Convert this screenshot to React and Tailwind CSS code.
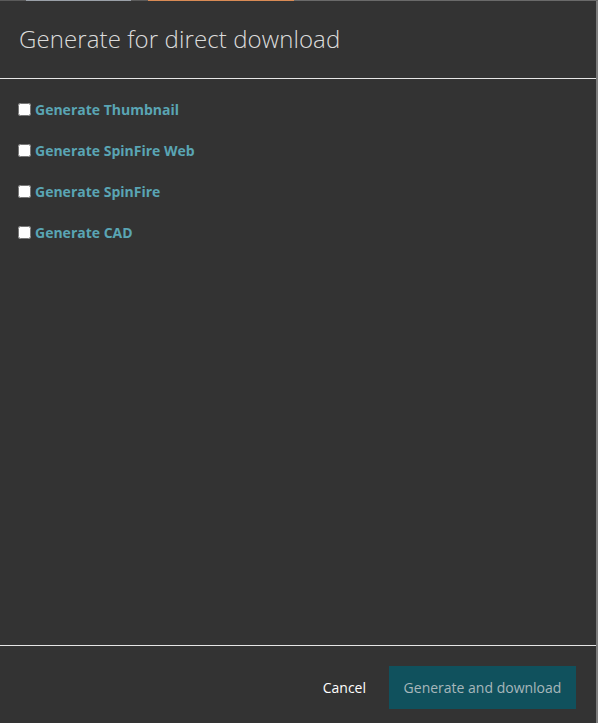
const options = [
  "Generate Thumbnail",
  "Generate SpinFire Web",
  "Generate SpinFire",
  "Generate CAD",
];

const App = () => {
  return (
    <div
      className="w-[598px] h-[723px] bg-[#6f6f6f] flex flex-col overflow-hidden"
      style={{ fontFamily: '"Open Sans", "Noto Sans", sans-serif' }}
    >
      {/* sliver of the page behind the dialog */}
      <div className="h-px flex shrink-0">
        <div className="w-[26px] bg-[#5a5a5a]" />
        <div className="w-[105px] bg-[#9aa0a8]" />
        <div className="w-[17px] bg-[#5a5a5a]" />
        <div className="w-[146px] bg-[#d98b55]" />
        <div className="flex-1 bg-[#6a6a6a]" />
      </div>

      <div className="flex-1 flex">
        <div className="w-[596px] bg-[#333333] flex flex-col">
          <div className="h-[78px] flex items-center px-[19px] pb-[1px] border-b border-[#e6e6e6]">
            <h2 className="text-[24px] font-light text-[#dcdcdc] tracking-[0.1px]">
              Generate for direct download
            </h2>
          </div>

          <div className="flex-1 flex flex-col gap-[20px] pt-[20px] px-[18px]">
            {options.map((label) => (
              <label key={label} className="flex items-center gap-[4px] h-[21px]">
                <input type="checkbox" className="w-[13px] h-[13px] m-0" />
                <span className="text-[14px] font-bold text-[#5aa5b4]">{label}</span>
              </label>
            ))}
          </div>

          <div className="h-[78px] border-t border-[#e6e6e6] flex items-center justify-end pr-[20px] pt-[6px]">
            <button className="text-[14px] text-white px-[23px] h-[43px]">Cancel</button>
            <button className="h-[43px] w-[187px] bg-[#10515d] text-[14px] text-[#a7b7bb]">
              Generate and download
            </button>
          </div>
        </div>
        <div className="w-[2px] bg-[#7d7d7d]" />
      </div>
    </div>
  );
};

export default App;
